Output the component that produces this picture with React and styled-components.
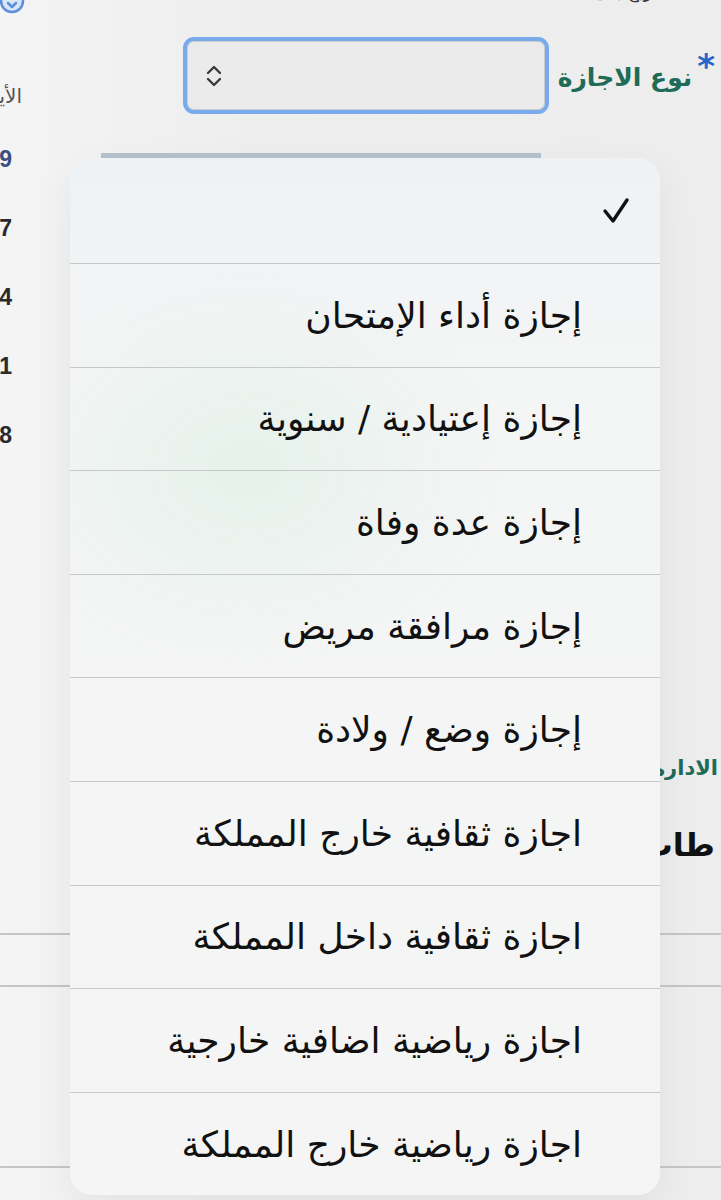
import React from 'react';
import styled, { createGlobalStyle } from 'styled-components';

const GlobalStyle = createGlobalStyle`
  html, body {
    margin: 0;
    padding: 0;
    background: #eeeeee;
  }
  body {
    font-family: "DejaVu Sans", "Noto Sans", sans-serif;
  }
`;

const Page = styled.div`
  position: relative;
  width: 721px;
  height: 1200px;
  overflow: hidden;
  direction: rtl;
  background: linear-gradient(90deg, #f4f4f4 0%, #eeeeee 35%, #ededed 100%);
`;

const TopStrip = styled.div`
  height: 14px;
  display: flex;
  justify-content: space-between;
  align-items: flex-start;
  overflow: hidden;
`;

const TopCaption = styled.span`
  margin-top: -19px;
  margin-right: 58px;
  font-size: 18px;
  color: #333;
`;

const HelpIcon = styled.span`
  margin-top: -12px;
  margin-left: -1px;
  width: 26px;
  height: 26px;
  display: inline-flex;
`;

const Body = styled.div`
  display: grid;
  grid-template-columns: 1fr 22px;
  height: 919px;
`;

const MainColumn = styled.div`
  display: flex;
  flex-direction: column;
`;

const FieldRow = styled.div`
  display: flex;
  align-items: center;
  gap: 9px;
  padding-right: 6px;
  margin-top: 23px;
`;

const Label = styled.label`
  display: flex;
  align-items: flex-start;
  gap: 5px;
  color: #1e6b58;
  font-weight: bold;
  font-size: 25px;
  line-height: 1;
  padding-top: 4px;
`;

const Star = styled.span`
  color: #2466c9;
  font-size: 34px;
  margin-top: -16px;
`;

const SelectBox = styled.div`
  box-sizing: border-box;
  flex-shrink: 0;
  width: 366px;
  height: 77px;
  border: 4px solid #79aaec;
  border-radius: 11px;
  background: #ebebeb;
  box-shadow: inset 0 0 0 1px #c9ccd1;
  display: flex;
  align-items: center;
  justify-content: flex-end;
  padding-left: 18px;
`;

const ProgressBar = styled.div`
  margin-top: 39px;
  margin-right: 180px;
  width: 440px;
  height: 6px;
  background: #b6c3cf;
`;

const DeptLink = styled.span`
  margin-top: 597px;
  padding-right: 3px;
  color: #1e6b58;
  font-weight: bold;
  font-size: 21px;
  white-space: nowrap;
`;

const SectionTitle = styled.h2`
  margin: 46px 0 0;
  padding-right: 6px;
  font-size: 32px;
  font-weight: bold;
  color: #111;
  white-space: nowrap;
`;

const SideColumn = styled.div`
  overflow: hidden;
  display: flex;
  flex-direction: column;
  white-space: nowrap;
`;

const SideLabel = styled.span`
  margin-top: 70px;
  margin-bottom: 11px;
  font-size: 20px;
  color: #555;
  height: 30px;
`;

const SideNumber = styled.span`
  height: 69px;
  line-height: 69px;
  padding-right: 10px;
  font-family: "Liberation Sans", Arial, sans-serif;
  font-weight: bold;
  font-size: 23px;
  color: ${(p) => (p.$accent ? '#3c4e80' : '#2a2a2a')};
`;

const TableRow = styled.div`
  border-top: 2px solid #c6c6c6;
  height: ${(p) => p.$h}px;
`;

const Menu = styled.ul`
  position: absolute;
  top: 158px;
  left: 70px;
  width: 590px;
  margin: 0;
  padding: 0;
  list-style: none;
  border-radius: 22px;
  overflow: hidden;
  background:
    radial-gradient(ellipse 260px 200px at 30% 30%, rgba(228, 241, 234, 0.85), rgba(228, 241, 234, 0) 100%),
    linear-gradient(180deg, #eef2f5 0%, #f4f5f5 20%, #f5f5f5 100%);
  box-shadow: 0 12px 40px rgba(0, 0, 0, 0.06);
`;

const MenuItem = styled.li`
  box-sizing: border-box;
  height: ${(p) => (p.$first ? 105 : 103.6)}px;
  display: flex;
  align-items: center;
  padding-right: ${(p) => (p.$first ? 30 : 78)}px;
  border-top: ${(p) => (p.$first ? 'none' : '1px solid #c8c8c8')};
  font-size: 36px;
  color: #111;
  white-space: nowrap;
`;

const options = [
  'إجازة أداء الإمتحان',
  'إجازة إعتيادية / سنوية',
  'إجازة عدة وفاة',
  'إجازة مرافقة مريض',
  'إجازة وضع / ولادة',
  'اجازة ثقافية خارج المملكة',
  'اجازة ثقافية داخل المملكة',
  'اجازة رياضية اضافية خارجية',
  'اجازة رياضية خارج المملكة',
];

const sideNumbers = ['29', '17', '14', '11', '18'];

function UpDownIcon() {
  return (
    <svg width="18" height="26" viewBox="0 0 18 26" fill="none">
      <path d="M3 10 L9 4 L15 10" stroke="#3a3a3a" strokeWidth="2.4" strokeLinecap="round" strokeLinejoin="round" />
      <path d="M3 16 L9 22 L15 16" stroke="#3a3a3a" strokeWidth="2.4" strokeLinecap="round" strokeLinejoin="round" />
    </svg>
  );
}

function CheckIcon() {
  return (
    <svg width="28" height="28" viewBox="0 0 28 28" fill="none">
      <path d="M3 14 L11 24 L25 3" stroke="#111" strokeWidth="3.4" strokeLinecap="round" strokeLinejoin="round" />
    </svg>
  );
}

function HelpGlyph() {
  return (
    <svg width="26" height="26" viewBox="0 0 26 26" fill="none">
      <circle cx="13" cy="13" r="11" fill="#d9e6f7" stroke="#5b8fd8" strokeWidth="2.5" />
      <path d="M9 15 L13 19 L17 15" stroke="#5b8fd8" strokeWidth="2.5" strokeLinecap="round" strokeLinejoin="round" />
    </svg>
  );
}

export default function App() {
  return (
    <>
      <GlobalStyle />
      <Page>
        <TopStrip>
          <TopCaption>تاريخ بداية</TopCaption>
          <HelpIcon>
            <HelpGlyph />
          </HelpIcon>
        </TopStrip>

        <Body>
          <MainColumn>
            <FieldRow>
              <Label>
                <Star>*</Star>
                نوع الاجازة
              </Label>
              <SelectBox>
                <UpDownIcon />
              </SelectBox>
            </FieldRow>
            <ProgressBar />
            <DeptLink>الادارة العامة</DeptLink>
            <SectionTitle>طات</SectionTitle>
          </MainColumn>

          <SideColumn>
            <SideLabel>الأيام</SideLabel>
            {sideNumbers.map((n, i) => (
              <SideNumber key={n} $accent={i === 0}>
                {n}
              </SideNumber>
            ))}
          </SideColumn>
        </Body>

        <TableRow $h={50} />
        <TableRow $h={179} />
        <TableRow $h={40} />

        <Menu>
          <MenuItem $first>
            <CheckIcon />
          </MenuItem>
          {options.map((o) => (
            <MenuItem key={o}>{o}</MenuItem>
          ))}
        </Menu>
      </Page>
    </>
  );
}
